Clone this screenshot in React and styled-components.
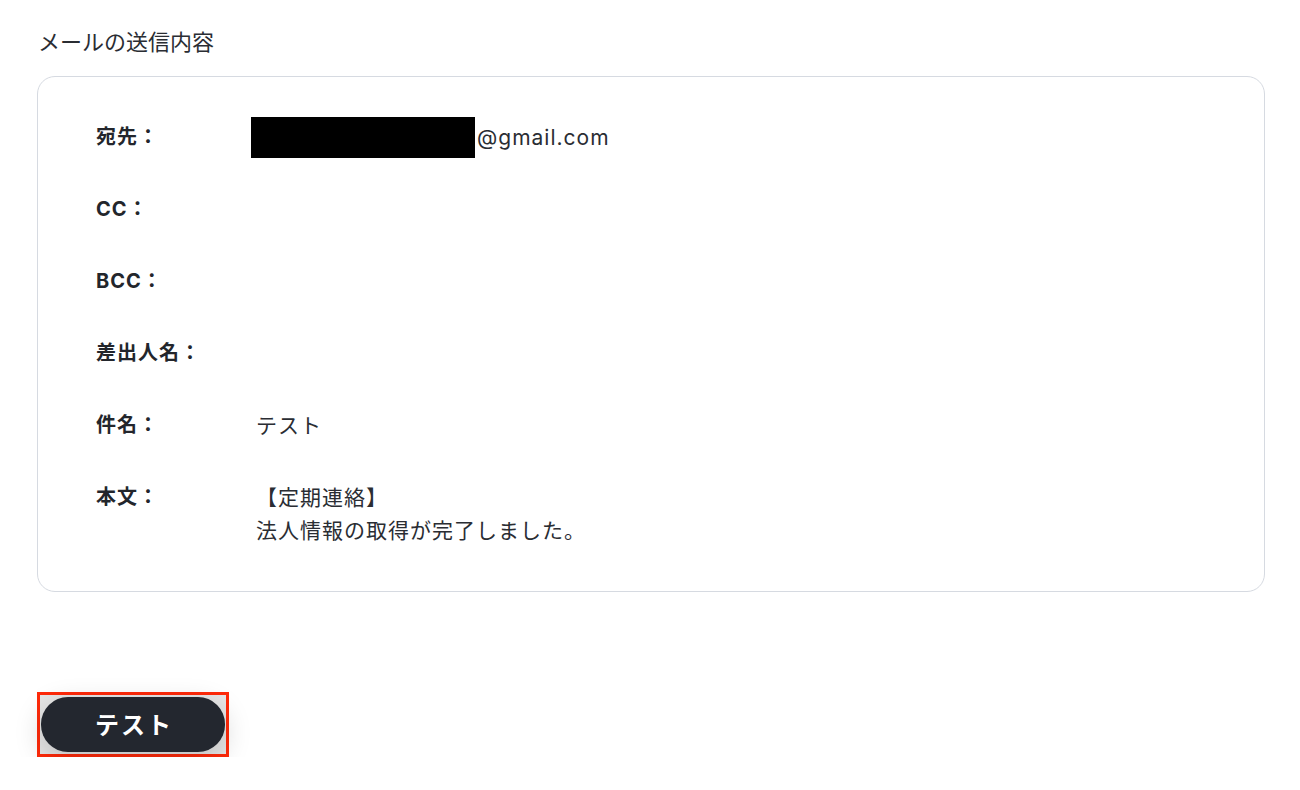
import styled, { createGlobalStyle } from 'styled-components'

const GlobalStyle = createGlobalStyle`
body {
  margin: 0;
  background: #ffffff;
  font-family: Inter, "Noto Sans CJK JP", sans-serif;
  color: #2a2d33;
}
`;

const Page = styled.div`
padding: 26px 35px 0 37px;
`;

const Title = styled.h2`
margin: 0 0 17px 1px;
font-size: 22px;
font-weight: 400;
line-height: 33px;
color: #2a2d33;
`;

const Card = styled.div`
box-sizing: border-box;
width: 1228px;
border: 1px solid #d6dae1;
border-radius: 18px;
padding: 44px 58px 44px 58px;
display: flex;
flex-direction: column;
gap: 39px;
`;

const Row = styled.div`
display: flex;
align-items: flex-start;
`;

const Label = styled.div`
width: 160px;
flex-shrink: 0;
font-size: 20px;
font-weight: 700;
letter-spacing: 1px;
line-height: 33px;
color: #23262c;
`;

const Value = styled.div`
display: flex;
flex-direction: column;
font-size: 21px;
letter-spacing: 1px;
line-height: 33px;
color: #2a2d33;
`;

const Line = styled.div`
display: flex;
align-items: center;
height: 33px;
`;

const Redacted = styled.span`
display: inline-block;
width: 224px;
height: 41px;
margin-left: -5px;
margin-right: 2px;
background: #000;
`;

const ButtonArea = styled.div`
padding-top: 100px;
`;

const Highlight = styled.div`
display: inline-block;
border: 3px solid #ff2a0a;
padding: 2px 1px;
background: #e6e6e6;
`;

const TestButton = styled.button`
display: block;
width: 184px;
height: 55px;
padding: 0 0 3px 2px;
border: none;
border-radius: 27px;
background: #23272f;
color: #ffffff;
font-family: Inter, "Noto Sans CJK JP", sans-serif;
font-size: 24px;
font-weight: 700;
letter-spacing: 2px;
box-shadow: 0 8px 28px rgba(0, 0, 0, 0.18);
cursor: pointer;
`;

const fields = [
  { label: '宛先：', lines: [null] },
  { label: 'CC：', lines: [''] },
  { label: 'BCC：', lines: [''] },
  { label: '差出人名：', lines: [''] },
  { label: '件名：', lines: ['テスト'] },
  { label: '本文：', lines: ['【定期連絡】', '法人情報の取得が完了しました。'] },
]

const App = () => {
  return (
    <Page>
      <GlobalStyle />
      <Title>メールの送信内容</Title>
      <Card>
        {fields.map((f) => (
          <Row key={f.label}>
            <Label>{f.label}</Label>
            <Value>
              {f.lines.map((l, i) => (
                <Line key={i}>
                  {l === null ? (
                    <>
                      <Redacted />
                      @gmail.com
                    </>
                  ) : l}
                </Line>
              ))}
            </Value>
          </Row>
        ))}
      </Card>
      <ButtonArea>
        <Highlight>
          <TestButton>テスト</TestButton>
        </Highlight>
      </ButtonArea>
    </Page>
  )
}

export default App
